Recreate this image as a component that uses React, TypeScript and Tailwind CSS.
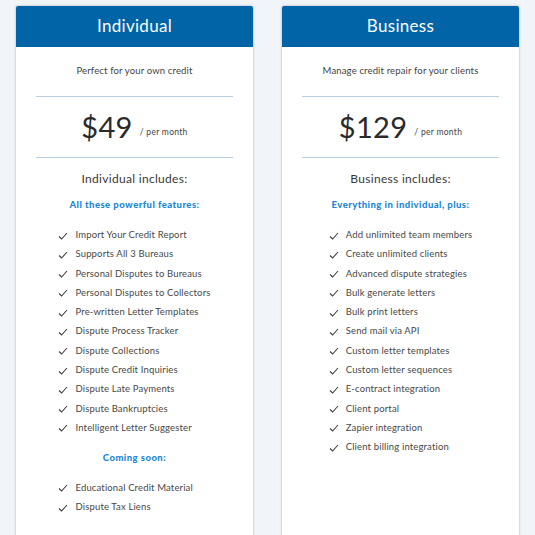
import React from "react";

const individual = [
  "Import Your Credit Report",
  "Supports All 3 Bureaus",
  "Personal Disputes to Bureaus",
  "Personal Disputes to Collectors",
  "Pre-written Letter Templates",
  "Dispute Process Tracker",
  "Dispute Collections",
  "Dispute Credit Inquiries",
  "Dispute Late Payments",
  "Dispute Bankruptcies",
  "Intelligent Letter Suggester",
];

const comingSoon = ["Educational Credit Material", "Dispute Tax Liens"];

const business = [
  "Add unlimited team members",
  "Create unlimited clients",
  "Advanced dispute strategies",
  "Bulk generate letters",
  "Bulk print letters",
  "Send mail via API",
  "Custom letter templates",
  "Custom letter sequences",
  "E-contract integration",
  "Client portal",
  "Zapier integration",
  "Client billing integration",
];

function Check() {
  return (
    <svg width="10" height="8" viewBox="0 0 10 8" className="shrink-0 mt-[3.5px]">
      <polyline points="1,4.5 3.6,7 9,1" fill="none" stroke="#3d3d3d" strokeWidth="1.1" />
    </svg>
  );
}

function FeatureList({ items }: { items: string[] }) {
  return (
    <ul className="flex flex-col gap-[6.3px] text-left">
      {items.map((item) => (
        <li key={item} className="flex items-start gap-[7px] h-[13px] text-[9.5px] leading-[13px] text-[#484848] tracking-[0.15px]">
          <Check />
          <span>{item}</span>
        </li>
      ))}
    </ul>
  );
}

function Lead({ children }: { children: React.ReactNode }) {
  return (
    <p className="text-center text-[9.5px] leading-[12px] font-black text-[#1a87d8] tracking-[0.45px]">{children}</p>
  );
}

function PlanCard({
  title, tagline, price, includes, lead, items, extra,
}: {
  title: string; tagline: string; price: string; includes: string; lead: string; items: string[]; extra?: string[];
}) {
  return (
    <div className="w-[239px] h-[560px] bg-white border border-[#d5dce3] rounded-t-[3px] shadow-[0_0_3px_rgba(0,0,0,0.08)] overflow-hidden">
      <div className="h-[41px] pb-[1px] bg-[#0064a7] flex items-center justify-center text-white text-[17px] tracking-[0.3px]">
        {title}
      </div>
      <div className="px-[20px] text-center">
        <p className="mt-[17px] text-[9.5px] leading-[14px] text-[#444] tracking-[0.15px]">{tagline}</p>
        <div className="mt-[18px] border-t border-[#b9cfdf]" />
        <div className="h-[60px] flex items-center justify-center gap-[7px]">
          <span className="text-[29px] leading-none text-[#2a2a2a] tracking-[0.3px] mt-[-2px]">{price}</span>
          <span className="text-[8.5px] text-[#444] mt-[10px] tracking-[0.3px]">/ per month</span>
        </div>
        <div className="border-t border-[#b9cfdf]" />
        <p className="mt-[13px] text-[12px] leading-[16px] text-[#383838] tracking-[0.3px]">{includes}</p>
        <div className="mt-[12px]">
          <Lead>{lead}</Lead>
        </div>
        <div className="mt-[17px] flex justify-center">
          <div>
            <FeatureList items={items} />
            {extra && (
              <>
                <div className="mt-[18px]">
                  <Lead>Coming soon:</Lead>
                </div>
                <div className="mt-[17px]">
                  <FeatureList items={extra} />
                </div>
              </>
            )}
          </div>
        </div>
      </div>
    </div>
  );
}

export default function App() {
  return (
    <div className="w-[535px] h-[535px] overflow-hidden bg-[#f1f5f9] font-['Lato',sans-serif]">
      <div className="flex gap-[27px] pl-[15px] pt-[5px]">
        <PlanCard
          title="Individual"
          tagline="Perfect for your own credit"
          price="$49"
          includes="Individual includes:"
          lead="All these powerful features:"
          items={individual}
          extra={comingSoon}
        />
        <PlanCard
          title="Business"
          tagline="Manage credit repair for your clients"
          price="$129"
          includes="Business includes:"
          lead="Everything in individual, plus:"
          items={business}
        />
      </div>
    </div>
  );
}
